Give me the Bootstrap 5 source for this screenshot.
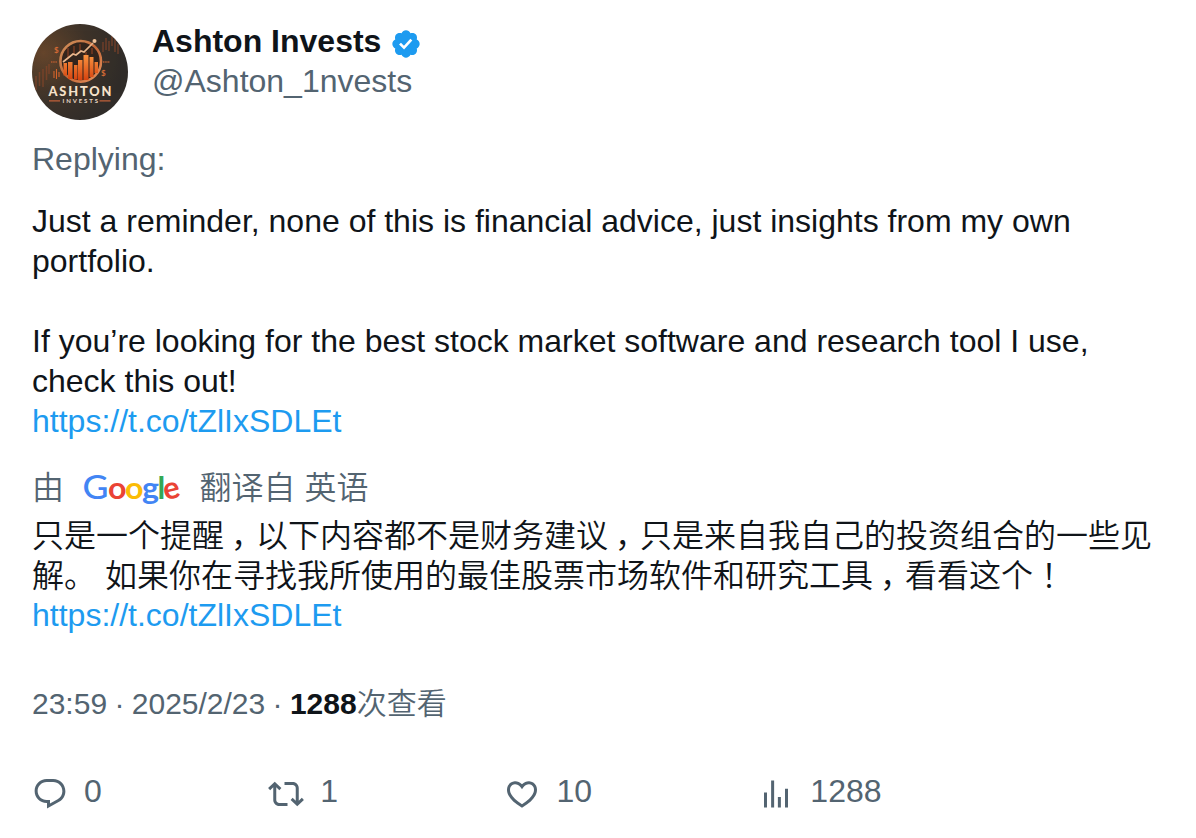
<!DOCTYPE html>
<html lang="zh-CN">
<head>
<meta charset="utf-8">
<meta name="viewport" content="width=device-width, initial-scale=1">
<title>Ashton Invests</title>
<link href="https://cdn.jsdelivr.net/npm/bootstrap@5.3.0/dist/css/bootstrap.min.css" rel="stylesheet">
<style>
  body { font-family: "Liberation Sans", "Noto Sans CJK SC", sans-serif; font-size: 32px; line-height: 40px; color: #0f1419; background: #fff; }
  .post { padding: 21px 32px 0; height: 838px; overflow: hidden; }
  .soft { color: #536471; }
  .post a { color: #1d9bf0; }
  .avatar { width: 96px; height: 96px; margin-top: 3px; }
  .head { gap: 24px; height: 98px; }
  .verified { width: 32px; height: 32px; fill: #1d9bf0; margin: 6px 0 0 9px; }
  .reply { margin-top: 20px; }
  .body-text { margin-top: 22px; white-space: pre-line; }
  .source { margin-top: 27px; height: 40px; }
  .google { width: 100px; height: 40px; margin: 0 18.5px 0 17px; overflow: visible; }
  .zh { font-weight: 350; }
  .translation { margin-top: 8px; }
  .translated-link { margin-top: -1px; }
  .comma, .bang { font-feature-settings: "halt"; }
  .comma { margin-left: 7px; margin-right: 9px; }
  .bang { margin-left: 8px; }
  .dot { margin-left: -1px; margin-right: -1px; }
  .meta { margin-top: 49px; font-size: 30px; }
  .meta strong { color: #0f1419; }
  .actions { margin-top: 47px; gap: 166.4px; }
  .action { gap: 16px; }
  .action svg { width: 36px; height: 36px; fill: #536471; margin-top: 5px; }
</style>
</head>
<body>
<article class="post">
  <header class="head d-flex">
    <svg class="avatar flex-shrink-0" viewBox="0 0 96 96">
      <defs>
        <clipPath id="round"><circle cx="48" cy="48" r="48"/></clipPath>
        <radialGradient id="bg" cx=".12" cy=".3" r=".85"><stop offset="0" stop-color="#65452b"/><stop offset=".55" stop-color="#3e3329"/><stop offset="1" stop-color="#302c29"/></radialGradient>
        <linearGradient id="bar" x1="0" y1="0" x2="0" y2="1"><stop offset="0" stop-color="#fb9440"/><stop offset="1" stop-color="#d5430f"/></linearGradient>
        <linearGradient id="ring" x1="0" y1="0" x2="1" y2="1"><stop offset="0" stop-color="#d1935e"/><stop offset=".5" stop-color="#c26738"/><stop offset="1" stop-color="#e9925c"/></linearGradient>
      </defs>
      <g clip-path="url(#round)">
        <rect width="96" height="96" fill="url(#bg)"/>
        <path d="M4 52v14M7.500 48v14M11 45v18M14.500 42v14M17 40v10M71 18v10M74 14v12M77 17v10M80 10v12M83 14v14M86 20v10" stroke="#8a4628" stroke-width="1.500" opacity=".65"/>
        <path d="M22 47v7M24.500 45v10M27 48v5" stroke="#d5642a" stroke-width="1.100"/>
        <path d="M19 38h6M71 38h7" stroke="#b35a30" stroke-width="1.300" stroke-dasharray="1.500 .7"/>
        <circle cx="48.700" cy="37.300" r="20.300" fill="#33241c" stroke="url(#ring)" stroke-width="2.600"/>
        <path d="M36 24v9M42 22v9M48 20v7M54 34v-6M60 24v6" stroke="#9b4522" stroke-width="1"/>
        <path d="M31.500 39h3.500v12.500h-3.500zM36 38h4.500v17H36zM42 41h3.500v14.500H42zM46 36h4.500v20H46zM51.500 31h5v25h-5zM57.500 33h4v20h-4zM62.500 38h3.500v11h-3.500z" fill="url(#bar)"/>
        <path d="M31 38l10-8 3 1 5-4 3 1 9-9" fill="none" stroke="#e9b58b" stroke-width="1.700"/>
        <circle cx="62.500" cy="17" r="2" fill="#efc29a"/>
        <g font-family="Lato" fill="#d56a35" font-weight="700" font-size="8"><text x="22" y="29">$</text><text x="69" y="52">$</text></g>
        <text x="16.500" y="72" font-family="Lato" font-weight="900" font-size="12.800" textLength="63" lengthAdjust="spacing" fill="#f6e2ca">ASHTON</text>
        <text x="30.500" y="79.200" font-family="Lato" font-weight="700" font-size="6" textLength="35.500" lengthAdjust="spacing" fill="#e9d8c5">INVESTS</text>
        <path d="M17 76.800h11M67.500 76.800h11" stroke="#c0603a" stroke-width="1.200"/>
      </g>
    </svg>
    <div>
      <div class="d-flex align-items-center fw-bold"><span>Ashton Invests</span>
        <svg class="verified" viewBox="0 0 24 24"><path d="M22.250 12c0-1.430-.88-2.670-2.190-3.340.46-1.390.2-2.900-.81-3.910s-2.520-1.270-3.910-.81c-.66-1.310-1.910-2.190-3.340-2.190s-2.670.88-3.330 2.190c-1.400-.46-2.910-.2-3.920.81s-1.260 2.520-.8 3.910c-1.310.67-2.200 1.910-2.200 3.340s.89 2.670 2.200 3.340c-.46 1.390-.21 2.900.8 3.910s2.520 1.260 3.910.81c.67 1.310 1.910 2.190 3.340 2.190s2.680-.88 3.340-2.190c1.390.45 2.900.2 3.910-.81s1.270-2.520.81-3.910c1.310-.67 2.190-1.910 2.190-3.340zm-11.710 4.200L6.800 12.460l1.410-1.420 2.260 2.260 4.800-5.230 1.470 1.360-6.200 6.770z"/></svg>
      </div>
      <div class="soft">@Ashton_1nvests</div>
    </div>
  </header>

  <div class="reply soft">Replying:</div>

  <div class="body-text">Just a reminder, none of this is financial advice, just insights from my own portfolio.

If you’re looking for the best stock market software and research tool I use, check this out!
<a class="text-decoration-none" href="#">https://t.co/tZlIxSDLEt</a></div>

  <div class="source soft zh d-flex">
    <span>由</span>
    <svg class="google" viewBox="0 0 100 40" font-family="Lato" font-weight="700" role="img" aria-label="Google">
      <text y="30.500" font-size="33" font-weight="500" fill="#4285f4" x="1.500" textLength="26" lengthAdjust="spacingAndGlyphs">G</text>
      <text y="30.500" font-size="31" fill="#ea4335" x="27" textLength="18.500" lengthAdjust="spacingAndGlyphs">o</text>
      <text y="30.500" font-size="31" fill="#fbbc05" x="44" textLength="18.500" lengthAdjust="spacingAndGlyphs">o</text>
      <text y="31" font-size="31" fill="#4285f4" x="61" textLength="17" lengthAdjust="spacingAndGlyphs">g</text>
      <text y="30.500" font-size="31" fill="#34a853" x="76.500">l</text>
      <text font-size="31" fill="#ea4335" transform="translate(84.500 32.500) rotate(-14)">e</text>
    </svg>
    <span>翻译自 英语</span>
  </div>

  <div class="translation zh">只是一个提醒<span class="comma">，</span>以下内容都不是财务建议<span class="comma">，</span>只是来自我自己的投资组合的一些见解。 如果你在寻找我所使用的最佳股票市场软件和研究工具<span class="comma">，</span>看看这个<span class="bang">！</span></div>
  <div class="translated-link"><a class="text-decoration-none" href="#">https://t.co/tZlIxSDLEt</a></div>

  <div class="meta soft"><span>23:59 <span class="dot">·</span> 2025/2/23 <span class="dot">·</span> </span><strong>1288</strong><span class="zh">次查看</span></div>

  <footer class="actions soft d-flex">
    <div class="action d-flex"><svg viewBox="0 0 24 24"><path d="M1.751 10c0-4.420 3.584-8 8.005-8h4.366c4.490 0 8.129 3.640 8.129 8.130 0 2.960-1.607 5.680-4.196 7.110l-8.054 4.460v-3.690h-.067c-4.490.1-8.183-3.510-8.183-8.010zm8.005-6c-3.317 0-6.005 2.690-6.005 6 0 3.370 2.770 6.080 6.138 6.010l.351-.01h1.761v2.300l5.087-2.810c1.951-1.080 3.163-3.130 3.163-5.360 0-3.390-2.744-6.130-6.129-6.130H9.756z"/></svg><span>0</span></div>
    <div class="action d-flex"><svg viewBox="0 0 24 24"><path d="M4.500 3.880l4.432 4.140-1.364 1.460L5.500 7.550V16c0 1.100.896 2 2 2H13v2H7.500c-2.209 0-4-1.790-4-4V7.550L1.432 9.480.068 8.020 4.500 3.880zM16.500 6H11V4h5.500c2.209 0 4 1.790 4 4v8.450l2.068-1.930 1.364 1.460-4.432 4.140-4.432-4.140 1.364-1.460 2.068 1.930V8c0-1.100-.896-2-2-2z"/></svg><span>1</span></div>
    <div class="action d-flex"><svg viewBox="0 0 24 24"><path d="M16.697 5.500c-1.222-.06-2.679.51-3.890 2.160l-.805 1.090-.806-1.090C9.984 6.010 8.526 5.440 7.304 5.500c-1.243.07-2.349.78-2.910 1.910-.552 1.120-.633 2.780.479 4.820 1.074 1.970 3.257 4.270 7.129 6.610 3.870-2.340 6.052-4.640 7.126-6.610 1.111-2.040 1.030-3.700.477-4.820-.561-1.130-1.666-1.840-2.908-1.910zm4.187 7.690c-1.351 2.480-4.001 5.120-8.379 7.670l-.503.3-.504-.3c-4.379-2.550-7.029-5.190-8.382-7.670-1.360-2.500-1.410-4.860-.514-6.670.887-1.790 2.647-2.910 4.601-3.010 1.651-.09 3.368.56 4.798 2.010 1.429-1.450 3.146-2.100 4.796-2.010 1.954.1 3.714 1.220 4.601 3.010.896 1.810.846 4.170-.514 6.670z"/></svg><span>10</span></div>
    <div class="action d-flex"><svg viewBox="0 0 24 24"><path d="M8.750 21V3h2v18h-2zM18 21V8.500h2V21h-2zM4 21l.004-10h2L6 21H4zm9.248 0v-7h2v7h-2z"/></svg><span>1288</span></div>
  </footer>
</article>
<script src="https://cdn.jsdelivr.net/npm/bootstrap@5.3.0/dist/js/bootstrap.bundle.min.js"></script>
</body>
</html>
